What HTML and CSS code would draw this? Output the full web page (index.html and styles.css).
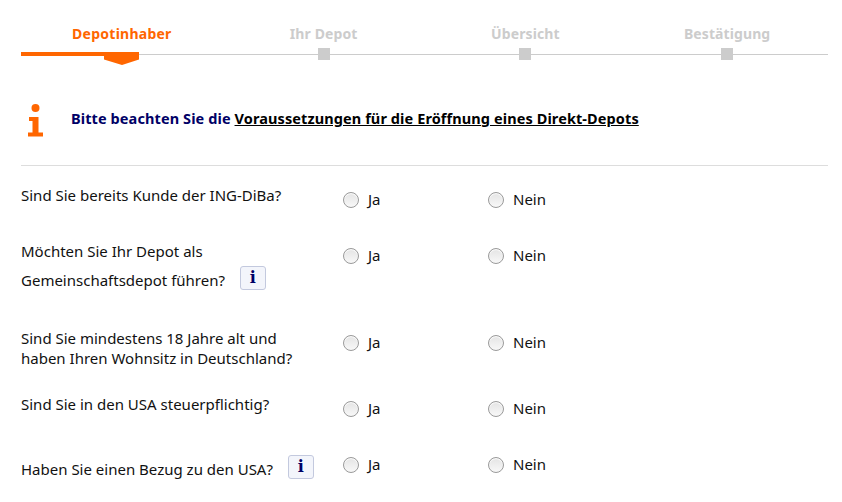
FILE: index.html
```html
<!DOCTYPE html>
<html lang="de">
<head>
    <meta charset="UTF-8">
    <title>Depot eröffnen</title>
    <link rel="stylesheet" href="styles.css">
</head>
<body>
    <div class="page">
        <ol class="steps">
            <li class="step step-active">
                Depotinhaber
                <svg class="step-pointer" width="118" height="14" viewBox="0 0 118 14"><path d="M0 0H118V7.500L101 13L83 7.500V4H0Z" fill="#ff6600"/></svg>
            </li>
            <li class="step">Ihr Depot</li>
            <li class="step">Übersicht</li>
            <li class="step">Bestätigung</li>
        </ol>

        <div class="notice">
            <svg class="notice-icon" width="15" height="33" viewBox="0 0 15 33"><circle cx="7.500" cy="4" r="4" fill="#ff6600"/><path d="M1 13H10.500V28.500H15V32.500H0V28.500H4.500V17H1Z" fill="#ff6600"/></svg>
            <p>Bitte beachten Sie die <a href="#">Voraussetzungen für die Eröffnung eines Direkt-Depots</a></p>
        </div>

        <form class="questions">
            <div class="question">
                <div class="question-text">Sind Sie bereits Kunde der ING-DiBa?</div>
                <label class="choice"><input type="radio" name="q1"> Ja</label>
                <label class="choice"><input type="radio" name="q1"> Nein</label>
            </div>
            <div class="question">
                <div class="question-text">Möchten Sie Ihr Depot als<br>Gemeinschaftsdepot führen? <button type="button" class="info-btn">i</button></div>
                <label class="choice"><input type="radio" name="q2"> Ja</label>
                <label class="choice"><input type="radio" name="q2"> Nein</label>
            </div>
            <div class="question">
                <div class="question-text">Sind Sie mindestens 18 Jahre alt und<br>haben Ihren Wohnsitz in Deutschland?</div>
                <label class="choice"><input type="radio" name="q3"> Ja</label>
                <label class="choice"><input type="radio" name="q3"> Nein</label>
            </div>
            <div class="question">
                <div class="question-text">Sind Sie in den USA steuerpflichtig?</div>
                <label class="choice"><input type="radio" name="q4"> Ja</label>
                <label class="choice"><input type="radio" name="q4"> Nein</label>
            </div>
            <div class="question">
                <div class="question-text">Haben Sie einen Bezug zu den USA? <button type="button" class="info-btn">i</button></div>
                <label class="choice"><input type="radio" name="q5"> Ja</label>
                <label class="choice"><input type="radio" name="q5"> Nein</label>
            </div>
        </form>
    </div>
</body>
</html>
```

FILE: styles.css
```css
html, body {
    margin: 0;
    background-color: #fff;
}

.page {
    padding: 0 14px 0 21px;
    font-family: "Noto Sans", Arial, sans-serif;
    font-size: 15px;
    line-height: 20px;
    color: #111;
}

/* Schritte */
.steps {
    display: flex;
    margin: 0;
    padding: 24px 0 0;
    list-style: none;
    border-bottom: 1px solid #ccc;
    height: 30px;
}

.step {
    position: relative;
    flex: 1;
    text-align: center;
    font-size: 14px;
    font-weight: 700;
    letter-spacing: 0.1px;
    color: #ccc;
}

.step::after {
    content: "";
    position: absolute;
    left: 50%;
    top: 24px;
    width: 12px;
    height: 12px;
    margin-left: -6px;
    background-color: #ccc;
}

.step-active {
    letter-spacing: 0.25px;
    color: #ff6600;
}

.step-active::after {
    display: none;
}

.step-pointer {
    position: absolute;
    left: 0;
    top: 28px;
}

/* Hinweis */
.notice {
    display: flex;
    align-items: center;
    box-sizing: border-box;
    height: 111px;
    padding: 16px 0 0 7px;
    border-bottom: 1px solid #ddd;
}

.notice-icon {
    margin: 4px 28px 0 0;
}

.notice p {
    margin: 0;
    font-size: 14.500px;
    font-weight: 700;
    letter-spacing: 0.1px;
    color: #000066;
}

.notice a {
    color: #000;
}

/* Fragen */
.questions {
    padding-top: 19px;
}

.question {
    display: grid;
    grid-template-columns: 322px 145px 145px;
    min-height: 30px;
    margin-bottom: 26px;
}

.choice {
    display: flex;
    align-items: flex-start;
    gap: 9px;
    height: 20px;
    padding-top: 4px;
}

.choice input {
    appearance: none;
    flex: none;
    width: 16px;
    height: 16px;
    margin: 3px 0 0;
    border: 1px solid #9a9a9a;
    border-radius: 50%;
    background: linear-gradient(#e4e4e4, #f8f8f8);
    box-shadow: inset 0 1px 1px #fff;
}

.info-btn {
    width: 26px;
    height: 24px;
    margin: 5px 0 12px 11px;
    padding: 0;
    border: 1px solid #c3c9de;
    border-radius: 3px;
    background-color: #f3f5fb;
    color: #000066;
    font-family: "DejaVu Serif", serif;
    font-size: 16px;
    font-weight: 700;
    line-height: 20px;
    vertical-align: middle;
}
```
